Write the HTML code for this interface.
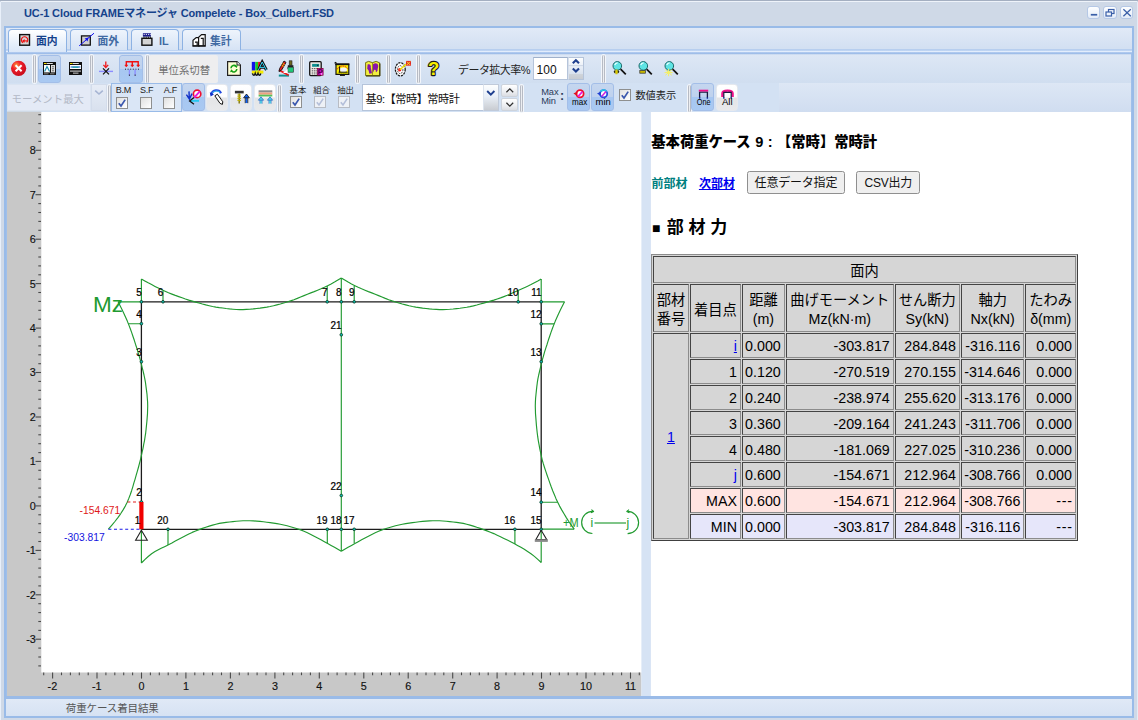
<!DOCTYPE html>
<html lang="ja"><head><meta charset="utf-8"><title>UC-1 Cloud FRAME</title>
<style>

*{box-sizing:border-box;margin:0;padding:0}
html,body{width:1138px;height:720px;overflow:hidden}
body{position:relative;background:#cfd9e7;font-family:"Liberation Sans","Noto Sans CJK JP",sans-serif;font-size:11px;color:#000}
.abs{position:absolute}
#hl-top{left:0;top:0;width:1138px;height:1px;background:#a4afc1}
#hl-top2{left:1px;top:1px;width:1136px;height:1px;background:#eef3fa}
#hl-left{left:0;top:2px;width:1px;height:718px;background:#e9f0fa}
#title{left:24px;top:6px;font-weight:bold;font-size:11px;line-height:14px;color:#15428b;white-space:nowrap;letter-spacing:-0.12px}
.tool{top:6px;width:13.8px;height:13.4px;border:1px solid #b5c8e6;border-radius:3px;background:linear-gradient(#fdfeff,#e4ecf8)}
#frame{left:4px;top:26px;width:1130px;height:692px;border:2px solid #99bbe8;background:#fff}
#frameL{left:6px;top:53px;width:1px;height:645px;background:#9fbfea}
#frameR{left:1131px;top:53px;width:1px;height:645px;background:#9fbfea}
#hl-right{left:1137px;top:2px;width:1px;height:718px;background:#e4ebf5}
#tabstrip{left:6px;top:28px;width:1126px;height:20px;background:linear-gradient(#e1eaf7,#d3e0f2)}
#tabline1{left:6px;top:48px;width:1126px;height:7px;background:linear-gradient(#d3e0f2 0,#d3e0f2 0.7px,#a9c5ed 1.9px,#c9dcf6 2.8px,#e8f1fd 3.4px,#b8cff1 4.3px,#8fb3e6 5.2px,#c2d4ee 6.2px,#dfe8f5 7px)}
#tabline2,#tabline3{display:none}
.tab{top:29px;height:21px;border:1px solid #8db2e3;border-bottom:none;border-radius:4px 4px 0 0;background:linear-gradient(#eef4fc,#d6e3f5);}
.tab.act{background:linear-gradient(#ffffff,#e3edfa 70%,#dbe7f8);height:23px}
.tab span{position:absolute;top:4.2px;font-weight:bold;font-size:10.8px;line-height:14px;color:#416aa3;white-space:nowrap}
.tab.act span{color:#15428b}
#tb1{left:6px;top:55px;width:1126px;height:28px;background:linear-gradient(#dde7f5,#d0def0)}
#tb2{left:6px;top:83px;width:1126px;height:29px;background:linear-gradient(#dde7f5,#d0ddf0)}
#tb2l{left:6px;top:83px;width:773px;height:29px;background:#d3e1f3}
.sep{width:3px;border-left:1px solid #b7bbc4;border-right:1px solid #b7bbc4;background:#eceef2;border-radius:1.5px;box-shadow:0 0 0 1px #f3f6fb}
.btnp{border:1px solid #a3bee8;border-radius:3px;background:linear-gradient(#c5d6ef 0,#bfd2ee 48%,#a7c7f1 52%,#a9c9f2)}
.btnw{border:1px solid #e6e9ee;border-radius:3.5px;background:linear-gradient(#ffffff 0,#fcfcfd 47%,#e4e5e7 53%,#e8e9eb)}
.cb{width:12px;height:12px;border:1px solid #8e8f8f;background:linear-gradient(135deg,#e0e0e0,#fff);}
.cb.dis{border-color:#b8bcc4;background:#eef1f6}
.lbl{white-space:nowrap;color:#222}
#status{left:6px;top:699px;width:1126px;height:17px;background:linear-gradient(#e0e9f6,#d6e2f3)}
#statline{left:6px;top:696px;width:1126px;height:3px;background:#9abbe8}
#stattext{left:65.8px;top:702px;letter-spacing:-0.12px;font-size:10.5px;line-height:13px;color:#555;white-space:nowrap}
#lruler{left:7px;top:112px;width:34.3px;height:584px;background:#c8c8c8}
#bruler{left:7px;top:672.4px;width:634.3px;height:24px;background:#c8c8c8}
#split{left:641px;top:112px;width:10px;height:584px;background:#d6e3f4}
#diagram{left:0;top:0;width:1138px;height:720px;pointer-events:none}
#right{left:651px;top:112px;width:480px;height:584px;background:#fff;overflow:hidden}

#right h3{position:absolute;left:0.3px;top:19.6px;font-family:"Liberation Serif","Noto Sans CJK JP",serif;font-size:14.3px;line-height:18px;font-weight:bold;color:#000;white-space:nowrap}
#right h3 b{font-family:"Noto Sans CJK JP",sans-serif}
#right h3 i{font-style:normal;font-family:"Liberation Sans",sans-serif;font-size:14.6px;word-spacing:0.4px;margin-left:0px}
#nav{position:absolute;left:0.5px;top:60.2px;height:24px;white-space:nowrap;font-size:12px;line-height:24px;font-weight:bold}
#nav .p{position:absolute;left:0;top:0;color:#008080}
#nav .n{position:absolute;left:47.4px;top:0;color:#0000ee;text-decoration:underline}
.hb{position:absolute;top:59.4px;height:22.6px;border:1px solid #8f8f8f;border-radius:2.5px;background:#efefef;font-size:12px;letter-spacing:-0.2px;line-height:22.4px;text-align:center;color:#111;white-space:nowrap;font-family:"Liberation Sans","Noto Sans CJK JP",sans-serif}
#right h2{position:absolute;left:1px;top:105.2px;font-size:17px;line-height:22px;font-weight:bold;white-space:nowrap;font-family:"Liberation Sans","Noto Sans CJK JP",sans-serif;word-spacing:0px}
#right h2 s{text-decoration:none;font-size:14px;position:relative;top:-0.5px;margin-right:1.5px}
#tbl{position:absolute;left:0px;top:142.2px;border:1px solid #8c8c8c;border-right-color:#404040;border-bottom-color:#404040;border-spacing:1px;border-collapse:separate;background:#d6d6d6;font-size:14.25px;font-family:"Liberation Sans","Noto Sans CJK JP",sans-serif;color:#000}
#tbl td,#tbl th{border:1px solid #444;border-right-color:#8c8c8c;border-bottom-color:#8c8c8c;padding:2px 2px 0;height:24.84px;line-height:20.6px;font-weight:normal;white-space:nowrap;text-align:center;vertical-align:middle}
#tbl td.r{text-align:right;padding-right:3px;padding-left:1px}
#tbl tr.max td:last-child,#tbl tr.min td:last-child{letter-spacing:0.7px;padding-right:2.4px}
#tbl tr.max td{background:#ffe4e1} #tbl tr.min td{background:#e6e6fa}
#tbl tr.max td.c1,#tbl td.c1{background:#d6d6d6}
#tbl a{color:#0000ee;text-decoration:underline}
#tbl th.h2{height:47.6px;line-height:19.4px;padding-top:4px}
#tbl th.h1{height:27.3px}

</style></head><body>

<div class="abs" id="hl-top"></div><div class="abs" id="hl-top2"></div><div class="abs" id="hl-left"></div>
<div class="abs" id="title">UC-1 Cloud FRAMEマネージャ Compelete - Box_Culbert.FSD</div>
<div class="abs tool" style="left:1086.5px"><svg width="12" height="11" viewBox="0 0 12 11" style="position:absolute;left:0;top:0"><rect x="2.8" y="6.9" width="6.4" height="1.7" fill="#3a5fa8"/></svg></div>
<div class="abs tool" style="left:1103px"><svg width="12" height="11" viewBox="0 0 12 11" style="position:absolute;left:0;top:0"><rect x="4.5" y="2.5" width="5.5" height="4" fill="none" stroke="#3a5fa8" stroke-width="1.2"/><rect x="2" y="5" width="5.5" height="4" fill="#eef3fb" stroke="#3a5fa8" stroke-width="1.2"/></svg></div>
<div class="abs tool" style="left:1119.6px"><svg width="12" height="11" viewBox="0 0 12 11" style="position:absolute;left:0;top:0"><path d="M2.4 2.2l7.4 7M9.8 2.2l-7.4 7" stroke="#3a5fa8" stroke-width="1.25"/></svg></div>
<div class="abs" id="frame"></div><div class="abs" id="hl-right"></div>
<div class="abs" id="tabstrip"></div>
<div class="abs" id="tabline1"></div><div class="abs" id="tabline2"></div><div class="abs" id="tabline3"></div>
<div class="abs tab act" style="left:8px;width:59px"><span style="left:27px">面内</span></div><div class="abs tab" style="left:70px;width:58px"><span style="left:26.5px">面外</span></div><div class="abs tab" style="left:131px;width:48px"><span style="left:27px">IL</span></div><div class="abs tab" style="left:182px;width:59px"><span style="left:27px">集計</span></div><svg class="abs" style="left:0;top:26px" width="260" height="28" viewBox="0 26 260 28"><rect x="19.7" y="34.6" width="9.8" height="10.6" fill="#d6d6d6" stroke="#111" stroke-width="1.4"/><path d="M26.6 42.4A3.2 3.2 0 1 0 23.2 42.8" fill="none" stroke="#f01010" stroke-width="1.15"/><path d="M27 40.9H23.4" stroke="#f01010" stroke-width="1.1"/><path d="M22 40.9L24.6 39L24.6 42.8Z" fill="#f01010"/><rect x="81.5" y="35.9" width="8.8" height="9.2" fill="#cfcfcf" stroke="#111" stroke-width="1.3"/><path d="M79.2 45.8L94 33.2" stroke="#1010f0" stroke-width="1"/><path d="M88.4 37.6L87.6 41.4L84.6 38.4Z" fill="#1010f0"/><rect x="141.9" y="38.3" width="10" height="6.9" fill="#d4d4d4" stroke="#111" stroke-width="1.4"/><rect x="142.9" y="33.2" width="8" height="3.4" fill="#1a1a8a"/><path d="M143.6 34.4h1.2M145.8 34.4h1.2M148 34.4h1.2M150 34.4h0.8" stroke="#fff" stroke-width="0.9"/><path d="M144 36.6v1.4M146.2 36.6v1.4M148.4 36.6v1.4M150.4 36.6v1.4" stroke="#111" stroke-width="0.9"/><path d="M193 45.8V40.2l3.2-2.6h3v8.2z" fill="#fff" stroke="#111" stroke-width="1.2"/><path d="M198.6 45.8V37.2l3-2.6h3.6v11.2z" fill="#fff" stroke="#111" stroke-width="1.2"/><path d="M200.8 38.4h2.4v7.4M195 42.2h2.2v3.6" stroke="#111" stroke-width="1.2" fill="none"/><path d="M192.6 46H205.6" stroke="#111" stroke-width="1.2"/></svg>
<div class="abs" id="tb1"></div><div class="abs" id="tb2"></div><div class="abs" id="tb2l"></div>
<div class="abs" id="frameL"></div><div class="abs" id="frameR"></div><div class="abs" id="statline"></div><div class="abs" id="status"></div>
<div class="abs" id="stattext">荷重ケース着目結果</div>

<svg class="abs" style="left:10px;top:60px" width="17" height="17" viewBox="0 0 17 17"><defs><radialGradient id="rb" cx="0.35" cy="0.3" r="0.8"><stop offset="0" stop-color="#ff9a3c"/><stop offset="0.35" stop-color="#f0202c"/><stop offset="1" stop-color="#c00818"/></radialGradient></defs><circle cx="8.6" cy="8.3" r="7.6" fill="url(#rb)"/><path d="M5.6 5.3l6 6M11.6 5.3l-6 6" stroke="#fff" stroke-width="2"/></svg><div class="abs sep" style="left:33px;top:55px;height:28px"></div><div class="abs btnp" style="left:37.5px;top:54.5px;width:23.5px;height:28px"></div><svg class="abs" style="left:43px;top:62px" width="13" height="13.4" viewBox="0 0 13 13.4"><rect x="0" y="0" width="13" height="13.4" fill="#111"/><rect x="1" y="1" width="2.6" height="1" fill="#f5e400"/><rect x="3.8" y="1" width="6" height="1" fill="#ddd"/><rect x="1" y="3" width="6" height="7.4" fill="#fff"/><path d="M1.6 9.6L4 4.6L6.6 9.6" stroke="#1b8fb0" stroke-width="1.2" fill="none"/><rect x="8" y="3" width="4" height="7.4" fill="#ddd"/><path d="M10 4.2v1M10 6.2v1M10 8.2v1" stroke="#222" stroke-width="1.2"/><rect x="1" y="11.2" width="4.5" height="1.2" fill="#777"/><rect x="7" y="11.2" width="4.5" height="1.2" fill="#777"/></svg><svg class="abs" style="left:69px;top:62px" width="13" height="13.4" viewBox="0 0 13 13.4"><rect x="0" y="0" width="13" height="13.4" fill="#111"/><rect x="1" y="1" width="2.6" height="1" fill="#f5e400"/><rect x="3.8" y="1" width="6" height="1" fill="#ddd"/><rect x="1" y="3" width="11" height="4" fill="#fff"/><path d="M1.6 5H11.4" stroke="#2a6fd0" stroke-width="1.2"/><path d="M3.5 5.2H9.5" stroke="#18a0a0" stroke-width="1.2"/><rect x="1" y="8.6" width="11" height="1" fill="#ddd"/><rect x="4" y="10.4" width="5.5" height="1.6" fill="#888"/></svg><div class="abs sep" style="left:89.7px;top:55px;height:28px"></div><svg class="abs" style="left:98px;top:60px" width="16" height="17" viewBox="0 0 16 17"><path d="M1 11.4H15" stroke="#8c8cff" stroke-width="1.4"/><path d="M5 8.4l6 6M11 8.4l-6 6" stroke="#111" stroke-width="1.2"/><path d="M7.8 1.6V7" stroke="#f01818" stroke-width="1.3"/><path d="M5.4 4.8L7.8 7.6L10.2 4.8" stroke="#f01818" stroke-width="1.3" fill="none"/></svg><div class="abs btnp" style="left:119.3px;top:54.5px;width:23.5px;height:28px"></div><svg class="abs" style="left:124px;top:60px" width="17" height="17" viewBox="0 0 17 17"><path d="M2.3 6V1.7H14.2V6M8.3 1.7V6" stroke="#f01010" stroke-width="1.4" fill="none"/><path d="M0.9 5l1.4 2l1.4-2zM6.9 5l1.4 2l1.4-2zM12.8 5l1.4 2l1.4-2z" fill="#f01010" stroke="#f01010" stroke-width="0.6"/><path d="M1 9.2H15.6" stroke="#222" stroke-width="1" stroke-dasharray="1 1.6"/><path d="M5.4 9.6V15.4M11.1 9.6V15.4" stroke="#8c8cff" stroke-width="1.3"/><rect x="4.9" y="14.6" width="1.1" height="1.1" fill="#222"/><rect x="10.6" y="14.6" width="1.1" height="1.1" fill="#222"/></svg><div class="abs sep" style="left:145.6px;top:55px;height:28px"></div><div class="abs" style="left:149.2px;top:55px;width:69.2px;height:28px;background:#eeeeef;border-radius:2.5px"></div><div class="abs lbl" style="left:158.2px;top:65px;font-size:10.4px;line-height:12.4px;color:#707070;">単位系切替</div><svg class="abs" style="left:227px;top:61px" width="14" height="15" viewBox="0 0 14 15"><path d="M0.6 0.6H10L13.4 4V14.4H0.6Z" fill="#ffffd6" stroke="#222" stroke-width="1.2"/><path d="M10 0.6V4H13.4" fill="#fff" stroke="#222" stroke-width="1"/><path d="M4 7.2A3 3 0 0 1 9.2 5.4" fill="none" stroke="#18a018" stroke-width="1.6"/><path d="M9.8 8A3 3 0 0 1 4.6 10" fill="none" stroke="#18a018" stroke-width="1.6"/><path d="M10.8 4.2L9.6 7L7.4 5z" fill="#18a018"/><path d="M3 11.2L4.2 8.2L6.4 10.4z" fill="#18a018"/></svg><svg class="abs" style="left:250px;top:59px" width="20" height="20" viewBox="250 59 20 20"><rect x="251.8" y="61.9" width="3.5" height="8.8" fill="#1010e8"/><rect x="255.3" y="61.9" width="2.8" height="8.8" fill="#18c828"/><rect x="258.1" y="61.9" width="2.5" height="8.8" fill="#e81818"/><rect x="251.8" y="70.6" width="11.6" height="3" fill="#f4ec00"/><path d="M252.4 73.4c0.7 2.4 2 2.4 2.8 0c0.7 2.4 2 2.4 2.8 0c0.7 2.4 2 2.4 2.8 0" stroke="#111" stroke-width="1.5" fill="none"/><path d="M258.4 70L262.2 62L266.4 70M260 67.4h4.6" stroke="#111" stroke-width="2.9" fill="none" stroke-linejoin="miter"/><path d="M258.4 70L262.2 62L266.4 70M260 67.4h4.6" stroke="#38d0f0" stroke-width="1" fill="none"/></svg><svg class="abs" style="left:277.5px;top:60px" width="16" height="17" viewBox="0 0 16 17"><path d="M0.8 15.6H11" stroke="#109090" stroke-width="2"/><path d="M1 10L10.6 15.2" stroke="#f01818" stroke-width="1.8"/><path d="M6 1L1.6 8.6L1 11.6L3.8 9.8L8 2.4Z" fill="#e82020" stroke="#111" stroke-width="0.9"/><path d="M4.6 3.4l2 1.2M3.6 5.2l2 1.2" stroke="#f4d800" stroke-width="1"/><rect x="11.2" y="0.8" width="2.8" height="4.4" fill="#706820" stroke="#222" stroke-width="0.6"/><rect x="9.8" y="5.2" width="5.6" height="2" fill="#222"/><rect x="9.8" y="7.2" width="5.6" height="5" fill="#20c878" stroke="#222" stroke-width="0.6"/><path d="M5 13L9.6 9v4z" fill="#fff"/></svg><div class="abs sep" style="left:300px;top:55px;height:28px"></div><svg class="abs" style="left:304px;top:56px" width="50" height="25" viewBox="304 56 50 25"><rect x="309.7" y="61.7" width="11.5" height="13.9" rx="1" fill="#f0ece8" stroke="#151515" stroke-width="1.3"/><rect x="312.1" y="63.9" width="7.1" height="2.9" fill="#109090"/><rect x="317.2" y="64.8" width="1.1" height="1.1" fill="#111"/><path d="M312.3 68v7M314.3 68v7M316.1 68v7" stroke="#444" stroke-width="1" stroke-dasharray="1 0.8"/><rect x="317.3" y="68.4" width="5.8" height="6.8" fill="#f010e0" stroke="#700020" stroke-width="0.7"/><path d="M318.9 74.6V69.8h2.2c1.4 0 1.4 2.4 0 2.4h-2" stroke="#2a0030" stroke-width="1.1" fill="none"/><rect x="321" y="73.4" width="1.2" height="1.2" fill="#e8e8e8"/><rect x="336" y="64.2" width="12.8" height="10.2" fill="#f8f000" stroke="#151515" stroke-width="1.2"/><path d="M335.4 64.3H349.3" stroke="#111" stroke-width="1.7"/><path d="M334.4 63l1.6-0.8v2.4" stroke="#111" stroke-width="1" fill="none"/><path d="M337.2 69.4C338.6 65.4 345.4 64.6 347.8 69" stroke="#f02020" stroke-width="1" fill="none" stroke-dasharray="1.4 0.8"/><ellipse cx="343.4" cy="69.8" rx="3.6" ry="2.4" fill="#f4f4f8"/><path d="M339.6 66.4v6M338.6 72.2h9" stroke="#111" stroke-width="1"/><path d="M337.4 73.4h10.4" stroke="#a09800" stroke-width="0.8" stroke-dasharray="1 0.8"/><rect x="340" y="74.9" width="4.9" height="1.1" fill="#222"/></svg><div class="abs sep" style="left:355.6px;top:55px;height:28px"></div><svg class="abs" style="left:362px;top:58px" width="22" height="21" viewBox="362 58 22 21"><path d="M365.6 62.6L368.6 61.4L372.4 62.6L376.2 61.4L379.6 62.8V75.6H365.6Z" fill="#f2f040" stroke="#6a6200" stroke-width="0.9"/><path d="M366 76H380M379.9 63.4V76" stroke="#3a3600" stroke-width="1.1"/><path d="M372.5 62.8V75.4" stroke="#8a8000" stroke-width="0.8"/><path d="M367.6 64.6c2-1.2 3.8 0.6 3.2 3l1.2 5.6l-2.6 0.6l-0.8-3.4l-1.4-1.6z" fill="#8a14a8"/><path d="M373 64.2c2.2-1.6 4.8-0.8 5.2 1.4c0.4 2-1 3.2-0.6 5l-1.4 1.6l-1.8-2.4l-1.6 3z" fill="#8a14a8"/><circle cx="374.8" cy="70.8" r="1" fill="#f2f040"/></svg><div class="abs sep" style="left:386.5px;top:55px;height:28px"></div><svg class="abs" style="left:392px;top:58px" width="22" height="21" viewBox="392 58 22 21"><ellipse cx="400.3" cy="69.3" rx="4.9" ry="6.6" fill="#fff" stroke="#1a1a1a" stroke-width="1.3" stroke-dasharray="2.2 0.9"/><ellipse cx="400.2" cy="69.6" rx="2.7" ry="4" fill="none" stroke="#333" stroke-width="0.9" stroke-dasharray="1.6 0.9"/><circle cx="399.7" cy="69.8" r="1.7" fill="#f01818"/><path d="M399.8 69.8L407.2 63.4" stroke="#f0e000" stroke-width="1.5"/><rect x="406" y="60.9" width="5" height="4.8" fill="#e02828"/><path d="M406.8 61.6l3.4 3.4M410.2 61.6l-3.4 3.4" stroke="#f8e820" stroke-width="0.9"/></svg><div class="abs sep" style="left:416.8px;top:55px;height:28px"></div><svg class="abs" style="left:426px;top:59px" width="15" height="19" viewBox="0 0 15 19"><text x="7.6" y="16.4" text-anchor="middle" font-family="Liberation Sans, sans-serif" font-weight="bold" font-size="18.5" fill="#f8f000" stroke="#1a1a1a" stroke-width="2.3" stroke-linejoin="round" paint-order="stroke">?</text></svg><div class="abs lbl" style="left:458px;top:63.6px;font-size:11px;line-height:13px;color:#222;letter-spacing:-0.55px">データ拡大率%</div><div class="abs" style="left:533.3px;top:56.6px;width:35.2px;height:23.8px;background:#fff;border:1px solid #b5c4da;border-top-color:#9fb1cc"></div><div class="abs lbl" style="left:536.6px;top:62.8px;font-size:12px;line-height:14px;color:#111;">100</div><div class="abs" style="left:568.4px;top:56.6px;width:15.4px;height:23.8px;background:linear-gradient(#fdfefe,#e9eff8 40%,#d9e2ee 75%,#cfd4da 76%,#c8ccd2);border:1px solid #b5c4da;border-left:1px solid #d8e0ec"></div><svg class="abs" style="left:568.4px;top:57px" width="15.4" height="19" viewBox="0 0 15.4 19"><path d="M4.8 6.2L7.9 3.2L11 6.2" fill="none" stroke="#1f3f8f" stroke-width="2.1" stroke-linejoin="miter"/><path d="M4.8 11.6L7.9 14.6L11 11.6" fill="none" stroke="#1f3f8f" stroke-width="2.1"/><path d="M0.5 8.6H15" stroke="#c9d3e3" stroke-width="0.9"/></svg><div class="abs sep" style="left:602.4px;top:55px;height:28px"></div><svg class="abs" style="left:611.4px;top:60px" width="17" height="17" viewBox="0 0 17 17"><circle cx="6.3" cy="5.9" r="4.3" fill="#5ee4e4" stroke="#1a6868" stroke-width="1"/><path d="M3.8 5A2.8 2.8 0 0 1 6.6 2.9" stroke="#e4ffff" stroke-width="1.3" fill="none"/><path d="M9.6 9.2L14.8 14.4" stroke="#111" stroke-width="1.7"/><path d="M3 11.8h5M5.5 9.4v4.8" stroke="#d8c800" stroke-width="2"/><path d="M2.6 11.8l1.6-2v4zM8.4 11.8l-1.6-2v4z" fill="#222"/></svg><svg class="abs" style="left:636.8px;top:60px" width="17" height="17" viewBox="0 0 17 17"><circle cx="6.3" cy="5.9" r="4.3" fill="#5ee4e4" stroke="#1a6868" stroke-width="1"/><path d="M3.8 5A2.8 2.8 0 0 1 6.6 2.9" stroke="#e4ffff" stroke-width="1.3" fill="none"/><path d="M9.6 9.2L14.8 14.4" stroke="#111" stroke-width="1.7"/><rect x="2.8" y="10.6" width="5.6" height="2.6" fill="#c8b800" stroke="#333" stroke-width="0.7"/></svg><svg class="abs" style="left:662.8px;top:60px" width="17" height="17" viewBox="0 0 17 17"><circle cx="6.3" cy="5.9" r="4.3" fill="#5ee4e4" stroke="#1a6868" stroke-width="1"/><path d="M3.8 5A2.8 2.8 0 0 1 6.6 2.9" stroke="#e4ffff" stroke-width="1.3" fill="none"/><path d="M9.6 9.2L14.8 14.4" stroke="#111" stroke-width="1.7"/><path d="M2.4 9.8l6.4 5.4M8.8 9.8l-6.4 5.4M5.6 8.8v7.4M1.6 12.6h8" stroke="#f6f060" stroke-width="1"/></svg><div class="abs" style="left:7px;top:84.3px;width:84px;height:26.4px;background:#e4eaf6;border:1px solid #dbe4f1"></div><div class="abs lbl" style="left:11.6px;top:93.6px;font-size:10.4px;line-height:12.4px;color:#b3b9c6;">モーメント最大</div><div class="abs" style="left:91px;top:84.3px;width:16px;height:26.4px;background:linear-gradient(#e6ecf6,#d9e1ee);border:1px solid #d3dceb"></div><svg class="abs" style="left:91px;top:86px" width="16" height="12" viewBox="0 0 16 12"><path d="M4.2 4.6L8 8L11.8 4.6" fill="none" stroke="#a7b5d3" stroke-width="1.6"/></svg><div class="abs sep" style="left:108px;top:84.5px;height:27px"></div><div class="abs" style="left:110.5px;top:83.3px;width:71px;height:28.5px;background:#dae6f6;border:1px solid #99bbe8"></div><div class="abs lbl" style="left:115.8px;top:85.4px;font-size:9px;line-height:11px;color:#222;letter-spacing:-0.3px">B.M</div><div class="abs lbl" style="left:140px;top:85.4px;font-size:9px;line-height:11px;color:#222;letter-spacing:-0.3px">S.F</div><div class="abs lbl" style="left:163.8px;top:85.4px;font-size:9px;line-height:11px;color:#222;letter-spacing:-0.3px">A.F</div><div class="abs cb" style="left:115.7px;top:96.6px"><svg width="10" height="10" viewBox="0 0 10 10" style="position:absolute;left:0;top:0"><path d="M1.8 5.2L4 8L8.2 1.6" fill="none" stroke="#3a57ad" stroke-width="1.7"/></svg></div><div class="abs cb" style="left:139.5px;top:96.6px"></div><div class="abs cb" style="left:163.3px;top:96.6px"></div><div class="abs btnp" style="left:181.7px;top:83.3px;width:23px;height:28px"></div><div class="abs btnw" style="left:206px;top:83.6px;width:22.2px;height:27.4px"></div><div class="abs btnw" style="left:229.9px;top:83.6px;width:22.2px;height:27.4px"></div><div class="abs btnw" style="left:253.7px;top:83.6px;width:22.2px;height:27.4px"></div><svg class="abs" style="left:180px;top:82px" width="100" height="31" viewBox="180 82 100 31"><circle cx="197.1" cy="93.9" r="3.7" fill="#fff" stroke="#f0102c" stroke-width="1.7"/><path d="M199.8 91.4L194.2 97.6" stroke="#e818e0" stroke-width="1.9"/><path d="M189 91.4L189.3 98.4M186.4 94.6L189.4 99L192 93.6" stroke="#1030c8" stroke-width="1.4" fill="none"/><path d="M199 100.9H191" stroke="#20c8f0" stroke-width="1.7"/><path d="M194 97.6L189.6 100.9L194 104.2" stroke="#101010" stroke-width="1.3" fill="none"/><path d="M211.2 94.6C212.4 89.6 219 89 221 93.2" stroke="#2048e0" stroke-width="2.2" fill="none"/><path d="M212.2 93.2C213.8 90.6 218 90.4 220 92.6" stroke="#40d8f0" stroke-width="0.9" fill="none"/><path d="M209.8 92.2L210.6 96.4L214 94.4z" fill="#1030c8"/><path d="M214.8 95.8L217.4 94.2L222.8 101.8L222.4 104.4L220 103.4Z" fill="#fff" stroke="#111" stroke-width="1"/><path d="M219.6 96.2l2.4 3.6" stroke="#888" stroke-width="0.9" stroke-dasharray="0.8 0.8"/><rect x="234.9" y="90.8" width="8.8" height="2.6" fill="#333"/><path d="M239.2 93.4V103.6" stroke="#807400" stroke-width="1.4"/><path d="M237.4 95h3.6M237.4 96.8h3.6M237.4 98.6h3.6M237.4 100.4h3.6" stroke="#c0b000" stroke-width="1"/><path d="M246.5 103V97" stroke="#1060f0" stroke-width="2.2"/><path d="M243.6 97.8L246.5 94L249.4 97.8Z" fill="#1060f0" stroke="#111" stroke-width="0.8"/><path d="M245.2 103.2V97.8M247.8 103.2V97.8" stroke="#111" stroke-width="0.7"/><rect x="258.6" y="90.3" width="13.7" height="2.2" fill="#8c8c8c"/><rect x="258.6" y="92.5" width="13.7" height="2.2" fill="#f0a080"/><rect x="258.6" y="94.7" width="13.7" height="1.8" fill="#58c058"/><path d="M261 103.6V99.4M270 103.6V99.4" stroke="#58d8e8" stroke-width="2"/><path d="M258.4 100.2L261 96.8L263.6 100.2ZM267.4 100.2L270 96.8L272.6 100.2Z" fill="#58d8e8" stroke="#3070c8" stroke-width="0.8"/><path d="M259.8 103.8V100.2M262.2 103.8V100.2M268.8 103.8V100.2M271.2 103.8V100.2" stroke="#3070c8" stroke-width="0.6"/></svg><div class="abs sep" style="left:277.6px;top:84.5px;height:27px"></div><div class="abs lbl" style="left:289.6px;top:84.7px;font-size:8.4px;line-height:10.4px;color:#222;">基本</div><div class="abs lbl" style="left:313.2px;top:84.7px;font-size:8.4px;line-height:10.4px;color:#222;">組合</div><div class="abs lbl" style="left:337.2px;top:84.7px;font-size:8.4px;line-height:10.4px;color:#222;">抽出</div><div class="abs cb" style="left:290px;top:95.5px"><svg width="10" height="10" viewBox="0 0 10 10" style="position:absolute;left:0;top:0"><path d="M1.8 5.2L4 8L8.2 1.6" fill="none" stroke="#3a57ad" stroke-width="1.7"/></svg></div><div class="abs cb dis" style="left:314.1px;top:95.5px"><svg width="10" height="10" viewBox="0 0 10 10" style="position:absolute;left:0;top:0"><path d="M1.8 5.2L4 8L8.2 1.6" fill="none" stroke="#b4bfd9" stroke-width="1.6"/></svg></div><div class="abs cb dis" style="left:338.2px;top:95.5px"><svg width="10" height="10" viewBox="0 0 10 10" style="position:absolute;left:0;top:0"><path d="M1.8 5.2L4 8L8.2 1.6" fill="none" stroke="#b4bfd9" stroke-width="1.6"/></svg></div><div class="abs" style="left:362px;top:83.6px;width:121.5px;height:27.6px;background:#fff;border:1px solid #b5c4da"></div><div class="abs lbl" style="left:365.6px;top:93.2px;font-size:11.2px;line-height:13.2px;color:#111;letter-spacing:-0.5px">基9:【常時】常時計</div><div class="abs" style="left:483.4px;top:83.6px;width:15.6px;height:27.6px;background:linear-gradient(#fdfefe,#e9eff8 45%,#d5d9df 80%,#c9ccd2);border:1px solid #c0cada;border-left-color:#dde4ee"></div><svg class="abs" style="left:483.4px;top:86px" width="15.6" height="14" viewBox="0 0 15.6 14"><path d="M4.2 5L7.8 8.6L11.4 5" fill="none" stroke="#1f3f8f" stroke-width="1.9"/></svg><div class="abs" style="left:500.8px;top:83.8px;width:17.6px;height:13.4px;background:linear-gradient(#fff,#eceef2 60%,#dcdee3);border:1px solid #cdd3dc;border-radius:2px"></div><div class="abs" style="left:500.8px;top:97.6px;width:17.6px;height:13.6px;background:linear-gradient(#fff,#eceef2 60%,#dcdee3);border:1px solid #cdd3dc;border-radius:2px"></div><svg class="abs" style="left:500.8px;top:84px" width="17.6" height="27" viewBox="0 0 17.6 27"><path d="M5.4 8.2L8.8 4.8L12.2 8.2" fill="none" stroke="#333" stroke-width="1.3"/><path d="M5.4 18.8L8.8 22.2L12.2 18.8" fill="none" stroke="#333" stroke-width="1.3"/></svg><div class="abs sep" style="left:520px;top:84.5px;height:27px"></div><div class="abs lbl" style="left:541.2px;top:86.8px;font-size:9.3px;line-height:11.3px;color:#2a3a5a;letter-spacing:-0.1px">Max</div><div class="abs lbl" style="left:541.2px;top:95.8px;font-size:9.3px;line-height:11.3px;color:#2a3a5a;letter-spacing:-0.1px">Min</div><div class="abs lbl" style="left:560px;top:88.6px;font-size:12.5px;line-height:14.5px;color:#2a3a5a;font-weight:bold">:</div><div class="abs btnp" style="left:567.2px;top:83.3px;width:22.8px;height:28px"></div><div class="abs btnp" style="left:591.3px;top:83.3px;width:23.2px;height:28px"></div><svg class="abs" style="left:560px;top:82px" width="60" height="31" viewBox="560 82 60 31"><circle cx="580" cy="93.8" r="3.6" fill="#fff" stroke="#f0102c" stroke-width="1.8"/><path d="M582.4 91.6L578 96.6" stroke="#e818e0" stroke-width="1.7"/><path d="M573.4 93.6L577.6 91.4L577 95.8Z" fill="#e01020"/><text x="572" y="104.6" font-family="Liberation Sans, sans-serif" font-size="9.6" fill="#000" textLength="15.2" lengthAdjust="spacingAndGlyphs">max</text><circle cx="603.6" cy="93.8" r="3.6" fill="#fff" stroke="#2850e0" stroke-width="1.8"/><path d="M600.4 92A3.6 3.6 0 0 1 606.6 91.6" stroke="#20d8e8" stroke-width="1.4" fill="none"/><path d="M606 91.6L601.6 96.6" stroke="#d020e0" stroke-width="1.5"/><path d="M597 93.6L601.2 91.4L600.6 95.8Z" fill="#2040d0"/><text x="595.6" y="104.6" font-family="Liberation Sans, sans-serif" font-size="9.6" fill="#000" textLength="15.2" lengthAdjust="spacingAndGlyphs">min</text></svg><div class="abs cb" style="left:618.6px;top:89px"><svg width="10" height="10" viewBox="0 0 10 10" style="position:absolute;left:0;top:0"><path d="M1.8 5.2L4 8L8.2 1.6" fill="none" stroke="#3a57ad" stroke-width="1.7"/></svg></div><div class="abs lbl" style="left:635.4px;top:89.6px;font-size:10.2px;line-height:12.2px;color:#222;">数値表示</div><div class="abs sep" style="left:688px;top:84.5px;height:27px"></div><div class="abs btnp" style="left:691px;top:83.3px;width:23.4px;height:28px"></div><div class="abs btnw" style="left:715.5px;top:83.6px;width:22.8px;height:27.4px"></div><svg class="abs" style="left:690px;top:82px" width="50" height="31" viewBox="690 82 50 31"><path d="M699.6 98.4V92.2H707.4V98.4" fill="none" stroke="#1a1a40" stroke-width="1.3"/><path d="M698.8 90.6H708.2" stroke="#f0108c" stroke-width="1.8"/><path d="M699.6 97.4v1.2M707.4 97.4v1.2" stroke="#1030d0" stroke-width="1.2"/><text x="696.8" y="104.8" font-family="Liberation Sans, sans-serif" font-size="8.6" fill="#000" textLength="13.8" lengthAdjust="spacingAndGlyphs">One</text><path d="M722.4 97V93.6C722.4 89.6 732.6 89.6 732.6 93.6V97" fill="none" stroke="#f0108c" stroke-width="2.4"/><path d="M723.8 98.4V92.4H731.2V98.4" fill="none" stroke="#1a1a40" stroke-width="1.2"/><path d="M723.8 97.4v1.2M731.2 97.4v1.2" stroke="#1030d0" stroke-width="1.2"/><text x="722" y="104.8" font-family="Liberation Sans, sans-serif" font-size="8.6" fill="#000" textLength="10.6" lengthAdjust="spacingAndGlyphs">All</text></svg>


<svg class="abs" id="diagram" width="1138" height="720" viewBox="0 0 1138 720">
<rect x="7" y="111.7" width="34.3" height="584.3" fill="#c8c8c8"/><rect x="7" y="672.5" width="634.4" height="23.5" fill="#c8c8c8"/><rect x="641.4" y="111.7" width="9.5" height="584.3" fill="#d6e3f4"/>
<g stroke="#4a4a4a" stroke-width="1.1" fill="none"><path d="M38.3 665.9H41"/><path d="M38.3 657.0H41"/><path d="M38.3 648.1H41"/><path d="M35.5 639.2H41"/><path d="M38.3 630.4H41"/><path d="M38.3 621.5H41"/><path d="M38.3 612.6H41"/><path d="M38.3 603.7H41"/><path d="M35.5 594.8H41"/><path d="M38.3 585.9H41"/><path d="M38.3 577.0H41"/><path d="M38.3 568.1H41"/><path d="M38.3 559.2H41"/><path d="M35.5 550.4H41"/><path d="M38.3 541.5H41"/><path d="M38.3 532.6H41"/><path d="M38.3 523.7H41"/><path d="M38.3 514.8H41"/><path d="M35.5 505.9H41"/><path d="M38.3 497.0H41"/><path d="M38.3 488.1H41"/><path d="M38.3 479.2H41"/><path d="M38.3 470.3H41"/><path d="M35.5 461.4H41"/><path d="M38.3 452.6H41"/><path d="M38.3 443.7H41"/><path d="M38.3 434.8H41"/><path d="M38.3 425.9H41"/><path d="M35.5 417.0H41"/><path d="M38.3 408.1H41"/><path d="M38.3 399.2H41"/><path d="M38.3 390.3H41"/><path d="M38.3 381.4H41"/><path d="M35.5 372.5H41"/><path d="M38.3 363.7H41"/><path d="M38.3 354.8H41"/><path d="M38.3 345.9H41"/><path d="M38.3 337.0H41"/><path d="M35.5 328.1H41"/><path d="M38.3 319.2H41"/><path d="M38.3 310.3H41"/><path d="M38.3 301.4H41"/><path d="M38.3 292.5H41"/><path d="M35.5 283.6H41"/><path d="M38.3 274.8H41"/><path d="M38.3 265.9H41"/><path d="M38.3 257.0H41"/><path d="M38.3 248.1H41"/><path d="M35.5 239.2H41"/><path d="M38.3 230.3H41"/><path d="M38.3 221.4H41"/><path d="M38.3 212.5H41"/><path d="M38.3 203.6H41"/><path d="M35.5 194.7H41"/><path d="M38.3 185.9H41"/><path d="M38.3 177.0H41"/><path d="M38.3 168.1H41"/><path d="M38.3 159.2H41"/><path d="M35.5 150.3H41"/><path d="M38.3 141.4H41"/><path d="M38.3 132.5H41"/><path d="M38.3 123.6H41"/><path d="M38.3 114.7H41"/><path d="M43.7 672.5V675.2"/><path d="M52.6 672.5V678.6"/><path d="M61.5 672.5V675.2"/><path d="M70.4 672.5V675.2"/><path d="M79.3 672.5V675.2"/><path d="M88.2 672.5V675.2"/><path d="M97.0 672.5V678.6"/><path d="M105.9 672.5V675.2"/><path d="M114.8 672.5V675.2"/><path d="M123.7 672.5V675.2"/><path d="M132.6 672.5V675.2"/><path d="M141.5 672.5V678.6"/><path d="M150.4 672.5V675.2"/><path d="M159.3 672.5V675.2"/><path d="M168.2 672.5V675.2"/><path d="M177.1 672.5V675.2"/><path d="M185.9 672.5V678.6"/><path d="M194.8 672.5V675.2"/><path d="M203.7 672.5V675.2"/><path d="M212.6 672.5V675.2"/><path d="M221.5 672.5V675.2"/><path d="M230.4 672.5V678.6"/><path d="M239.3 672.5V675.2"/><path d="M248.2 672.5V675.2"/><path d="M257.1 672.5V675.2"/><path d="M266.0 672.5V675.2"/><path d="M274.9 672.5V678.6"/><path d="M283.7 672.5V675.2"/><path d="M292.6 672.5V675.2"/><path d="M301.5 672.5V675.2"/><path d="M310.4 672.5V675.2"/><path d="M319.3 672.5V678.6"/><path d="M328.2 672.5V675.2"/><path d="M337.1 672.5V675.2"/><path d="M346.0 672.5V675.2"/><path d="M354.9 672.5V675.2"/><path d="M363.8 672.5V678.6"/><path d="M372.6 672.5V675.2"/><path d="M381.5 672.5V675.2"/><path d="M390.4 672.5V675.2"/><path d="M399.3 672.5V675.2"/><path d="M408.2 672.5V678.6"/><path d="M417.1 672.5V675.2"/><path d="M426.0 672.5V675.2"/><path d="M434.9 672.5V675.2"/><path d="M443.8 672.5V675.2"/><path d="M452.7 672.5V678.6"/><path d="M461.5 672.5V675.2"/><path d="M470.4 672.5V675.2"/><path d="M479.3 672.5V675.2"/><path d="M488.2 672.5V675.2"/><path d="M497.1 672.5V678.6"/><path d="M506.0 672.5V675.2"/><path d="M514.9 672.5V675.2"/><path d="M523.8 672.5V675.2"/><path d="M532.7 672.5V675.2"/><path d="M541.5 672.5V678.6"/><path d="M550.4 672.5V675.2"/><path d="M559.3 672.5V675.2"/><path d="M568.2 672.5V675.2"/><path d="M577.1 672.5V675.2"/><path d="M586.0 672.5V678.6"/><path d="M594.9 672.5V675.2"/><path d="M603.8 672.5V675.2"/><path d="M612.7 672.5V675.2"/><path d="M621.6 672.5V675.2"/><path d="M630.5 672.5V678.6"/><path d="M639.3 672.5V675.2"/></g>
<g font-family="Liberation Sans, sans-serif" font-size="10.8" fill="#111" stroke="#111" stroke-width="0.15"><text x="35.8" y="643.1" text-anchor="end">-3</text><text x="35.8" y="598.7" text-anchor="end">-2</text><text x="35.8" y="554.2" text-anchor="end">-1</text><text x="35.8" y="509.8" text-anchor="end">0</text><text x="35.8" y="465.3" text-anchor="end">1</text><text x="35.8" y="420.9" text-anchor="end">2</text><text x="35.8" y="376.4" text-anchor="end">3</text><text x="35.8" y="332.0" text-anchor="end">4</text><text x="35.8" y="287.5" text-anchor="end">5</text><text x="35.8" y="243.1" text-anchor="end">6</text><text x="35.8" y="198.6" text-anchor="end">7</text><text x="35.8" y="154.2" text-anchor="end">8</text><text x="52.4" y="689.8" text-anchor="middle">-2</text><text x="96.8" y="689.8" text-anchor="middle">-1</text><text x="141.5" y="689.8" text-anchor="middle">0</text><text x="185.9" y="689.8" text-anchor="middle">1</text><text x="230.4" y="689.8" text-anchor="middle">2</text><text x="274.9" y="689.8" text-anchor="middle">3</text><text x="319.3" y="689.8" text-anchor="middle">4</text><text x="363.8" y="689.8" text-anchor="middle">5</text><text x="408.2" y="689.8" text-anchor="middle">6</text><text x="452.7" y="689.8" text-anchor="middle">7</text><text x="497.1" y="689.8" text-anchor="middle">8</text><text x="541.5" y="689.8" text-anchor="middle">9</text><text x="586.0" y="689.8" text-anchor="middle">10</text><text x="630.5" y="689.8" text-anchor="middle">11</text></g>
<g stroke="#1c1c1c" stroke-width="1.3" fill="none">
<path d="M141.4 301.8V529.3M141.4 301.8H541.2M541.2 301.8V529.3M141.4 529.3H541.2"/>
</g>
<g stroke="#219a30" stroke-width="1.15" fill="none" stroke-linejoin="round">
<path d="M341.3 278V551.3"/>
<path d="M141.4 279V301.8M541.2 279V301.8M141.4 529.3V563M541.2 529.3V562.5"/>
<polyline points="141.4,279.0 144.8,280.9 148.2,282.8 151.6,284.6 155.0,286.4 158.3,288.1 161.7,289.8 165.1,291.3 168.5,292.8 171.9,294.1 175.3,295.4 178.7,296.6 182.1,297.8 185.4,299.0 188.8,300.1 192.2,301.1 195.6,302.1 199.0,303.0 202.4,304.0 205.8,304.9 209.2,305.7 212.6,306.5 215.9,307.1 219.3,307.6 222.7,308.0 226.1,308.5 229.5,308.9 232.9,309.2 236.3,309.5 239.7,309.6 243.0,309.6 246.4,309.4 249.8,309.2 253.2,308.9 256.6,308.5 260.0,308.1 263.4,307.6 266.8,307.1 270.1,306.5 273.5,305.8 276.9,304.9 280.3,304.0 283.7,303.0 287.1,302.0 290.5,300.9 293.9,299.7 297.3,298.4 300.6,297.0 304.0,295.6 307.4,294.2 310.8,292.9 314.2,291.6 317.6,290.2 321.0,288.8 324.4,287.3 327.7,285.7 331.1,284.0 334.5,282.1 337.9,280.1 341.3,278.0"/><polyline points="341.3,278.0 344.7,280.1 348.1,282.1 351.5,284.0 354.9,285.7 358.2,287.3 361.6,288.8 365.0,290.2 368.4,291.6 371.8,292.9 375.2,294.2 378.6,295.6 382.0,297.0 385.3,298.4 388.7,299.7 392.1,300.9 395.5,302.0 398.9,303.0 402.3,304.0 405.7,304.9 409.1,305.8 412.5,306.5 415.8,307.1 419.2,307.6 422.6,308.1 426.0,308.5 429.4,308.9 432.8,309.2 436.2,309.4 439.6,309.6 442.9,309.6 446.3,309.5 449.7,309.3 453.1,309.0 456.5,308.6 459.9,308.2 463.3,307.7 466.7,307.2 470.0,306.6 473.4,305.9 476.8,305.0 480.2,304.0 483.6,303.1 487.0,302.1 490.4,301.1 493.8,300.1 497.2,299.0 500.5,297.9 503.9,296.6 507.3,295.3 510.7,293.8 514.1,292.3 517.5,290.7 520.9,289.2 524.3,287.7 527.6,286.2 531.0,284.6 534.4,282.8 537.8,281.0 541.2,279.0"/>
<polyline points="141.4,563.0 144.8,559.6 148.2,556.5 151.6,553.8 155.0,551.6 158.3,549.8 161.7,548.1 165.1,546.4 168.5,544.7 171.9,543.0 175.3,541.1 178.7,539.3 182.1,537.5 185.4,535.7 188.8,534.0 192.2,532.4 195.6,531.0 199.0,529.6 202.4,528.4 205.8,527.2 209.2,526.1 212.6,525.1 215.9,524.2 219.3,523.4 222.7,522.9 226.1,522.4 229.5,522.0 232.9,521.6 236.3,521.3 239.7,521.0 243.0,520.8 246.4,520.7 249.8,520.7 253.2,520.9 256.6,521.1 260.0,521.4 263.4,521.8 266.8,522.2 270.1,522.6 273.5,523.1 276.9,523.6 280.3,524.2 283.7,525.0 287.1,525.8 290.5,526.8 293.9,527.8 297.3,528.8 300.6,529.9 304.0,531.3 307.4,532.8 310.8,534.4 314.2,536.2 317.6,538.0 321.0,539.8 324.4,541.7 327.7,543.5 331.1,545.4 334.5,547.3 337.9,549.3 341.3,551.3"/><polyline points="341.3,551.3 344.7,549.3 348.1,547.3 351.5,545.4 354.9,543.5 358.2,541.7 361.6,539.8 365.0,538.0 368.4,536.2 371.8,534.4 375.2,532.8 378.6,531.3 382.0,529.9 385.3,528.8 388.7,527.8 392.1,526.8 395.5,525.8 398.9,525.0 402.3,524.2 405.7,523.6 409.1,523.1 412.5,522.6 415.8,522.2 419.2,521.8 422.6,521.4 426.0,521.1 429.4,520.9 432.8,520.7 436.2,520.7 439.6,520.8 442.9,521.0 446.3,521.3 449.7,521.6 453.1,522.0 456.5,522.4 459.9,522.9 463.3,523.4 466.7,524.2 470.0,525.1 473.4,526.1 476.8,527.3 480.2,528.4 483.6,529.6 487.0,530.9 490.4,532.2 493.8,533.6 497.2,535.2 500.5,536.7 503.9,538.4 507.3,540.1 510.7,541.8 514.1,543.6 517.5,545.4 520.9,547.3 524.3,549.3 527.6,551.5 531.0,553.8 534.4,556.4 537.8,559.4 541.2,562.5"/>
<polyline points="118.1,301.8 120.1,305.7 122.0,309.5 123.9,313.4 125.6,317.2 127.3,321.1 128.8,324.9 130.3,328.8 131.7,332.6 133.0,336.5 134.3,340.3 135.5,344.2 136.8,348.1 137.9,351.9 139.1,355.8 140.2,359.6 141.2,363.5 142.1,367.3 143.1,371.2 144.0,375.0 144.8,378.9 145.5,382.7 146.0,386.6 146.5,390.4 147.0,394.3 147.3,398.2 147.6,402.0 147.7,405.9 147.6,409.7 147.5,413.6 147.2,417.4 146.9,421.3 146.5,425.1 146.1,429.0 145.7,432.8 145.1,436.7 144.5,440.6 143.7,444.4 143.0,448.3 142.1,452.1 141.3,456.0 140.4,459.8 139.4,463.7 138.4,467.5 137.3,471.4 136.2,475.2 135.1,479.1 133.9,482.9 132.8,486.8 131.6,490.7 130.3,494.5 128.8,498.4 127.2,502.2 125.3,506.1 123.1,509.9 120.6,513.8 117.9,517.6 114.9,521.5 111.7,525.3 108.4,529.2"/><polyline points="564.5,301.8 562.5,305.7 560.6,309.5 558.7,313.4 557.0,317.2 555.3,321.1 553.8,324.9 552.3,328.8 550.9,332.6 549.6,336.5 548.3,340.3 547.1,344.2 545.8,348.1 544.6,351.9 543.5,355.8 542.4,359.6 541.4,363.5 540.5,367.3 539.6,371.2 538.7,375.0 537.9,378.9 537.3,382.7 536.8,386.6 536.4,390.4 536.0,394.3 535.6,398.2 535.4,402.0 535.3,405.9 535.4,409.7 535.5,413.6 535.8,417.4 536.1,421.3 536.4,425.1 536.8,429.0 537.2,432.8 537.7,436.7 538.3,440.6 539.0,444.4 539.7,448.3 540.5,452.1 541.3,456.0 542.2,459.8 543.3,463.7 544.5,467.5 545.8,471.4 547.1,475.2 548.5,479.1 549.8,482.9 551.2,486.8 552.7,490.7 554.3,494.5 555.9,498.4 557.7,502.2 559.6,506.1 561.7,509.9 564.0,513.8 566.3,517.6 568.8,521.5 571.5,525.3 574.2,529.2"/>
<path d="M118.1 301.8H141.4M128.4 323.7H141.4M541.2 301.8H564.5M541.2 323.8H554.2M541.2 502.2H557.7M541.2 529.1H574.2"/>
<path d="M163 290.4V301.8M327.2 286V301.8M354.2 286V301.8M518.2 290.4V301.8M168 529.3V545M327.3 529.3V543.3M354.2 529.3V543.3M514.9 529.3V544"/>
<path d="M594.5 523H626"/>
<path d="M593 511.4A11 11 0 0 0 592.4 533.5"/><path d="M627.4 511.4A11 11 0 0 1 627.6 533.6"/>
<path d="M591.4 509.6l2.2 1.8l-2.6 1.4M629 509.6l-2.2 1.8l2.6 1.4"/>
</g>
<path d="M127.4 502H141.4" stroke="#e02020" stroke-width="1.1" stroke-dasharray="3 2.6" fill="none"/>
<path d="M108.4 529.3H141.4" stroke="#1818e8" stroke-width="1.1" stroke-dasharray="3 2.6" fill="none"/>
<g><circle cx="141.4" cy="502" r="1.35" fill="#10c0b8" stroke="#0b3a20" stroke-width="0.8"/><circle cx="141.4" cy="361.7" r="1.35" fill="#10c0b8" stroke="#0b3a20" stroke-width="0.8"/><circle cx="141.4" cy="323.7" r="1.35" fill="#10c0b8" stroke="#0b3a20" stroke-width="0.8"/><circle cx="141.4" cy="301.8" r="1.35" fill="#10c0b8" stroke="#0b3a20" stroke-width="0.8"/><circle cx="163" cy="301.8" r="1.35" fill="#10c0b8" stroke="#0b3a20" stroke-width="0.8"/><circle cx="327.2" cy="301.8" r="1.35" fill="#10c0b8" stroke="#0b3a20" stroke-width="0.8"/><circle cx="341.3" cy="301.8" r="1.35" fill="#10c0b8" stroke="#0b3a20" stroke-width="0.8"/><circle cx="354.2" cy="301.8" r="1.35" fill="#10c0b8" stroke="#0b3a20" stroke-width="0.8"/><circle cx="518.2" cy="301.8" r="1.35" fill="#10c0b8" stroke="#0b3a20" stroke-width="0.8"/><circle cx="541.2" cy="301.8" r="1.35" fill="#10c0b8" stroke="#0b3a20" stroke-width="0.8"/><circle cx="541.2" cy="323.8" r="1.35" fill="#10c0b8" stroke="#0b3a20" stroke-width="0.8"/><circle cx="541.2" cy="361.7" r="1.35" fill="#10c0b8" stroke="#0b3a20" stroke-width="0.8"/><circle cx="541.2" cy="502.2" r="1.35" fill="#10c0b8" stroke="#0b3a20" stroke-width="0.8"/><circle cx="541.2" cy="529.3" r="1.35" fill="#10c0b8" stroke="#0b3a20" stroke-width="0.8"/><circle cx="514.9" cy="529.3" r="1.35" fill="#10c0b8" stroke="#0b3a20" stroke-width="0.8"/><circle cx="354.2" cy="529.3" r="1.35" fill="#10c0b8" stroke="#0b3a20" stroke-width="0.8"/><circle cx="341.3" cy="529.3" r="1.35" fill="#10c0b8" stroke="#0b3a20" stroke-width="0.8"/><circle cx="327.3" cy="529.3" r="1.35" fill="#10c0b8" stroke="#0b3a20" stroke-width="0.8"/><circle cx="168" cy="529.3" r="1.35" fill="#10c0b8" stroke="#0b3a20" stroke-width="0.8"/><circle cx="341.3" cy="334.8" r="1.35" fill="#10c0b8" stroke="#0b3a20" stroke-width="0.8"/><circle cx="341.3" cy="495.5" r="1.35" fill="#10c0b8" stroke="#0b3a20" stroke-width="0.8"/></g>
<path d="M141.4 502V529.3" stroke="#f00000" stroke-width="4.2" fill="none"/>
<path d="M141.4 530.3L135.6 540.3H147.3Z" stroke="#222" stroke-width="1.1" fill="none"/>
<path d="M541.2 530.3L535.8 539.6H546.8Z" stroke="#222" stroke-width="1.1" fill="none"/>
<path d="M534.8 540.6H547.8" stroke="#8a8a8a" stroke-width="2.6" fill="none"/>
<g font-family="Liberation Sans, sans-serif" font-size="11.3" fill="#000" stroke="#000" stroke-width="0.25"><text transform="translate(140.4,523.8) scale(0.88,1)" text-anchor="end">1</text><text transform="translate(141.7,496.2) scale(0.88,1)" text-anchor="end">2</text><text transform="translate(141.7,355.9) scale(0.88,1)" text-anchor="end">3</text><text transform="translate(141.7,317.9) scale(0.88,1)" text-anchor="end">4</text><text transform="translate(141.7,296.0) scale(0.88,1)" text-anchor="end">5</text><text transform="translate(163.3,296.0) scale(0.88,1)" text-anchor="end">6</text><text transform="translate(327.5,296.0) scale(0.88,1)" text-anchor="end">7</text><text transform="translate(341.6,296.0) scale(0.88,1)" text-anchor="end">8</text><text transform="translate(354.5,296.0) scale(0.88,1)" text-anchor="end">9</text><text transform="translate(518.5,296.0) scale(0.88,1)" text-anchor="end">10</text><text transform="translate(541.5,296.0) scale(0.88,1)" text-anchor="end">11</text><text transform="translate(541.5,318.0) scale(0.88,1)" text-anchor="end">12</text><text transform="translate(541.5,355.9) scale(0.88,1)" text-anchor="end">13</text><text transform="translate(541.5,496.4) scale(0.88,1)" text-anchor="end">14</text><text transform="translate(541.5,523.5) scale(0.88,1)" text-anchor="end">15</text><text transform="translate(515.2,523.5) scale(0.88,1)" text-anchor="end">16</text><text transform="translate(354.5,523.5) scale(0.88,1)" text-anchor="end">17</text><text transform="translate(341.6,523.5) scale(0.88,1)" text-anchor="end">18</text><text transform="translate(327.6,523.5) scale(0.88,1)" text-anchor="end">19</text><text transform="translate(168.3,523.5) scale(0.88,1)" text-anchor="end">20</text><text transform="translate(341.6,329.0) scale(0.88,1)" text-anchor="end">21</text><text transform="translate(341.6,489.7) scale(0.88,1)" text-anchor="end">22</text></g>
<text x="93" y="312.2" font-family="Liberation Sans, sans-serif" font-size="22.3" fill="#219a30" textLength="30" lengthAdjust="spacingAndGlyphs">Mz</text>
<text x="563" y="527.3" font-family="Liberation Sans, sans-serif" font-size="12" fill="#219a30" textLength="15.5" lengthAdjust="spacingAndGlyphs">+M</text>
<text x="590.4" y="527.4" font-family="Liberation Sans, sans-serif" font-size="12" fill="#219a30">i</text>
<text x="626.4" y="527.4" font-family="Liberation Sans, sans-serif" font-size="12" fill="#219a30">j</text>
<text x="79.6" y="513.8" font-family="Liberation Sans, sans-serif" font-size="11.3" fill="#e01818" textLength="40.5" lengthAdjust="spacingAndGlyphs">-154.671</text>
<text x="64" y="541" font-family="Liberation Sans, sans-serif" font-size="11.3" fill="#1414e0" textLength="40.7" lengthAdjust="spacingAndGlyphs">-303.817</text>
</svg>


<div class="abs" id="right">
<h3><b>基本荷重ケース</b><i> 9 : </i><b>【常時】常時計</b></h3>
<div id="nav"><span class="p">前部材</span><span class="n">次部材</span></div>
<div class="hb" style="left:95.8px;width:98.2px">任意データ指定</div>
<div class="hb" style="left:205.2px;width:64.2px">CSV出力</div>
<h2><s>■</s> 部 材 力</h2>
<table id="tbl">
<tr><th colspan="7" class="h1">面内</th></tr>
<tr><th class="h2" style="width:35.9px">部材<br>番号</th><th class="h2" style="width:51.1px">着目点</th><th class="h2" style="width:42.8px">距離<br>(m)</th><th class="h2" style="width:108px">曲げモーメント<br>Mz(kN·m)</th><th class="h2" style="width:65.1px">せん断力<br>Sy(kN)</th><th class="h2" style="width:63.6px">軸力<br>Nx(kN)</th><th class="h2" style="width:50.5px">たわみ<br>δ(mm)</th></tr>
<tr><td rowspan="8" class="c1"><a>1</a></td><td class="r"><a>i</a></td><td class="r">0.000</td><td class="r">-303.817</td><td class="r">284.848</td><td class="r">-316.116</td><td class="r">0.000</td></tr><tr><td class="r">1</td><td class="r">0.120</td><td class="r">-270.519</td><td class="r">270.155</td><td class="r">-314.646</td><td class="r">0.000</td></tr><tr><td class="r">2</td><td class="r">0.240</td><td class="r">-238.974</td><td class="r">255.620</td><td class="r">-313.176</td><td class="r">0.000</td></tr><tr><td class="r">3</td><td class="r">0.360</td><td class="r">-209.164</td><td class="r">241.243</td><td class="r">-311.706</td><td class="r">0.000</td></tr><tr><td class="r">4</td><td class="r">0.480</td><td class="r">-181.069</td><td class="r">227.025</td><td class="r">-310.236</td><td class="r">0.000</td></tr><tr><td class="r"><a>j</a></td><td class="r">0.600</td><td class="r">-154.671</td><td class="r">212.964</td><td class="r">-308.766</td><td class="r">0.000</td></tr><tr class="max"><td class="r">MAX</td><td class="r">0.600</td><td class="r">-154.671</td><td class="r">212.964</td><td class="r">-308.766</td><td class="r">---</td></tr><tr class="min"><td class="r">MIN</td><td class="r">0.000</td><td class="r">-303.817</td><td class="r">284.848</td><td class="r">-316.116</td><td class="r">---</td></tr>
</table>
</div>

</body></html>
